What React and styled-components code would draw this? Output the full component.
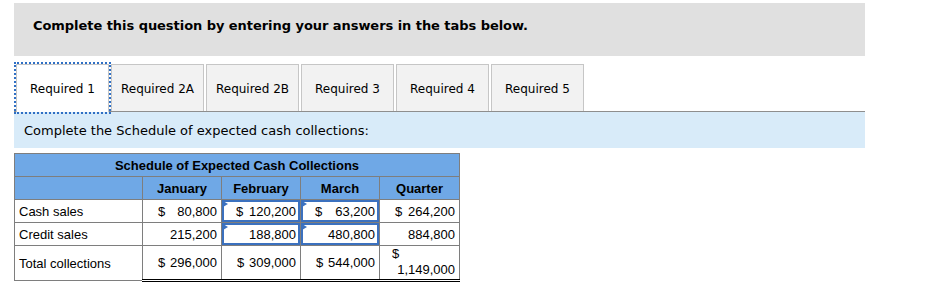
import React from 'react'
import styled, { createGlobalStyle } from 'styled-components'

const GlobalStyle = createGlobalStyle`
  html, body {
    margin: 0;
    padding: 0;
    background: #fff;
  }
`

const tabs = ['Required 1', 'Required 2A', 'Required 2B', 'Required 3', 'Required 4', 'Required 5']

const rows = [
  {
    label: 'Cash sales',
    cells: [
      { dollar: true, value: '80,800' },
      { dollar: true, value: '120,200', input: true },
      { dollar: true, value: '63,200', input: true },
      { dollar: true, value: '264,200' },
    ],
  },
  {
    label: 'Credit sales',
    cells: [
      { value: '215,200' },
      { value: '188,800', input: true },
      { value: '480,800', input: true },
      { value: '884,800' },
    ],
  },
]

const totals = [
  { dollar: true, value: '296,000' },
  { dollar: true, value: '309,000' },
  { dollar: true, value: '544,000' },
  { dollar: true, value: '1,149,000', stacked: true },
]

const Page = styled.div`
  width: 851px;
  padding: 3px 0 0 14px;
  font-family: "DejaVu Sans", Verdana, sans-serif;
  color: #000;
`

const Banner = styled.div`
  height: 53px;
  box-sizing: border-box;
  padding: 14px 0 0 19px;
  background: #e0e0e0;
  font-size: 13px;
  font-weight: bold;
  line-height: 18px;
  letter-spacing: -0.05px;
`

const TabBar = styled.div`
  display: flex;
  gap: 2px;
  margin-top: 8px;
  padding-left: 2px;
  height: 47px;
  border-bottom: 1px solid #8e8e8e;
`

const Tab = styled.div`
  width: 93px;
  box-sizing: border-box;
  display: flex;
  align-items: center;
  justify-content: center;
  padding-top: 1px;
  border: 1px solid #c6c6c6;
  border-bottom: none;
  background: ${p => (p.$active ? '#fff' : '#f2f2f2')};
  font-size: 12px;
  position: relative;
  height: ${p => (p.$active ? '48px' : '47px')};
  outline: ${p => (p.$active ? '2px dotted #2f6fc4' : 'none')};
  z-index: ${p => (p.$active ? 1 : 0)};
`

const Prompt = styled.div`
  height: 36px;
  box-sizing: border-box;
  padding: 0 10px;
  display: flex;
  align-items: center;
  background: #d8ebf9;
  font-size: 13px;
`

const Schedule = styled.table`
  margin-top: 5px;
  border-collapse: collapse;
  font-family: "Liberation Sans", Arial, sans-serif;
  font-size: 13px;
  border: 1px solid #7e7e7e;
  table-layout: fixed;
  width: 445px;
`

const HeadCell = styled.th`
  background: #6fa8e6;
  border: 1px solid #7e7e7e;
  height: 22px;
  padding: 0;
  font-weight: bold;
  text-align: center;
`

const LabelCell = styled.td`
  border: 1px solid #7e7e7e;
  height: ${p => (p.$total ? '31px' : '22px')};
  padding: 0 0 0 4px;
`

const NumCell = styled.td`
  border: 1px solid #7e7e7e;
  padding: 0;
  height: ${p => (p.$total ? '31px' : '22px')};
  ${p => p.$total && `
    border-top: 1px solid #000;
    border-bottom: 3px double #000;
  `}
`

const Amount = styled.div`
  position: relative;
  box-sizing: border-box;
  height: 100%;
  display: flex;
  justify-content: space-between;
  align-items: center;
  padding: ${p => (p.$input ? '0 2px 0 12px' : '0 4px 0 15px')};
  border: ${p => (p.$input ? '2px solid #3b71bf' : 'none')};
`

// little marker in the corner of an editable cell
const Flag = styled.span`
  position: absolute;
  left: -1px;
  top: -1px;
  width: 0;
  height: 0;
  border-left: 5px solid #3b71bf;
  border-top: 3px solid transparent;
  border-bottom: 3px solid transparent;
`

const Stacked = styled.div`
  display: flex;
  flex-direction: column;
  padding: 0 4px 1px 12px;
  line-height: 16px;
`

const StackedValue = styled.span`
  align-self: flex-end;
`

function Money({ dollar, value, input, stacked }) {
  if (stacked) {
    return (
      <Stacked>
        <span>$</span>
        <StackedValue>{value}</StackedValue>
      </Stacked>
    )
  }
  return (
    <Amount $input={input}>
      {input && <Flag />}
      <span>{dollar ? '$' : ''}</span>
      <span>{value}</span>
    </Amount>
  )
}

export default function App() {
  return (
    <Page>
      <GlobalStyle />
      <Banner>Complete this question by entering your answers in the tabs below.</Banner>
      <TabBar>
        {tabs.map((t, i) => (
          <Tab key={t} $active={i === 0}>{t}</Tab>
        ))}
      </TabBar>
      <Prompt>Complete the Schedule of expected cash collections:</Prompt>
      <Schedule>
        <colgroup>
          <col style={{ width: 128 }} />
          <col style={{ width: 79 }} />
          <col style={{ width: 79 }} />
          <col style={{ width: 79 }} />
          <col style={{ width: 80 }} />
        </colgroup>
        <thead>
          <tr>
            <HeadCell colSpan={5}>Schedule of Expected Cash Collections</HeadCell>
          </tr>
          <tr>
            <HeadCell />
            <HeadCell>January</HeadCell>
            <HeadCell>February</HeadCell>
            <HeadCell>March</HeadCell>
            <HeadCell>Quarter</HeadCell>
          </tr>
        </thead>
        <tbody>
          {rows.map(r => (
            <tr key={r.label}>
              <LabelCell>{r.label}</LabelCell>
              {r.cells.map((c, i) => (
                <NumCell key={i}>
                  <Money {...c} />
                </NumCell>
              ))}
            </tr>
          ))}
          <tr>
            <LabelCell $total>Total collections</LabelCell>
            {totals.map((c, i) => (
              <NumCell key={i} $total>
                <Money {...c} />
              </NumCell>
            ))}
          </tr>
        </tbody>
      </Schedule>
    </Page>
  )
}
